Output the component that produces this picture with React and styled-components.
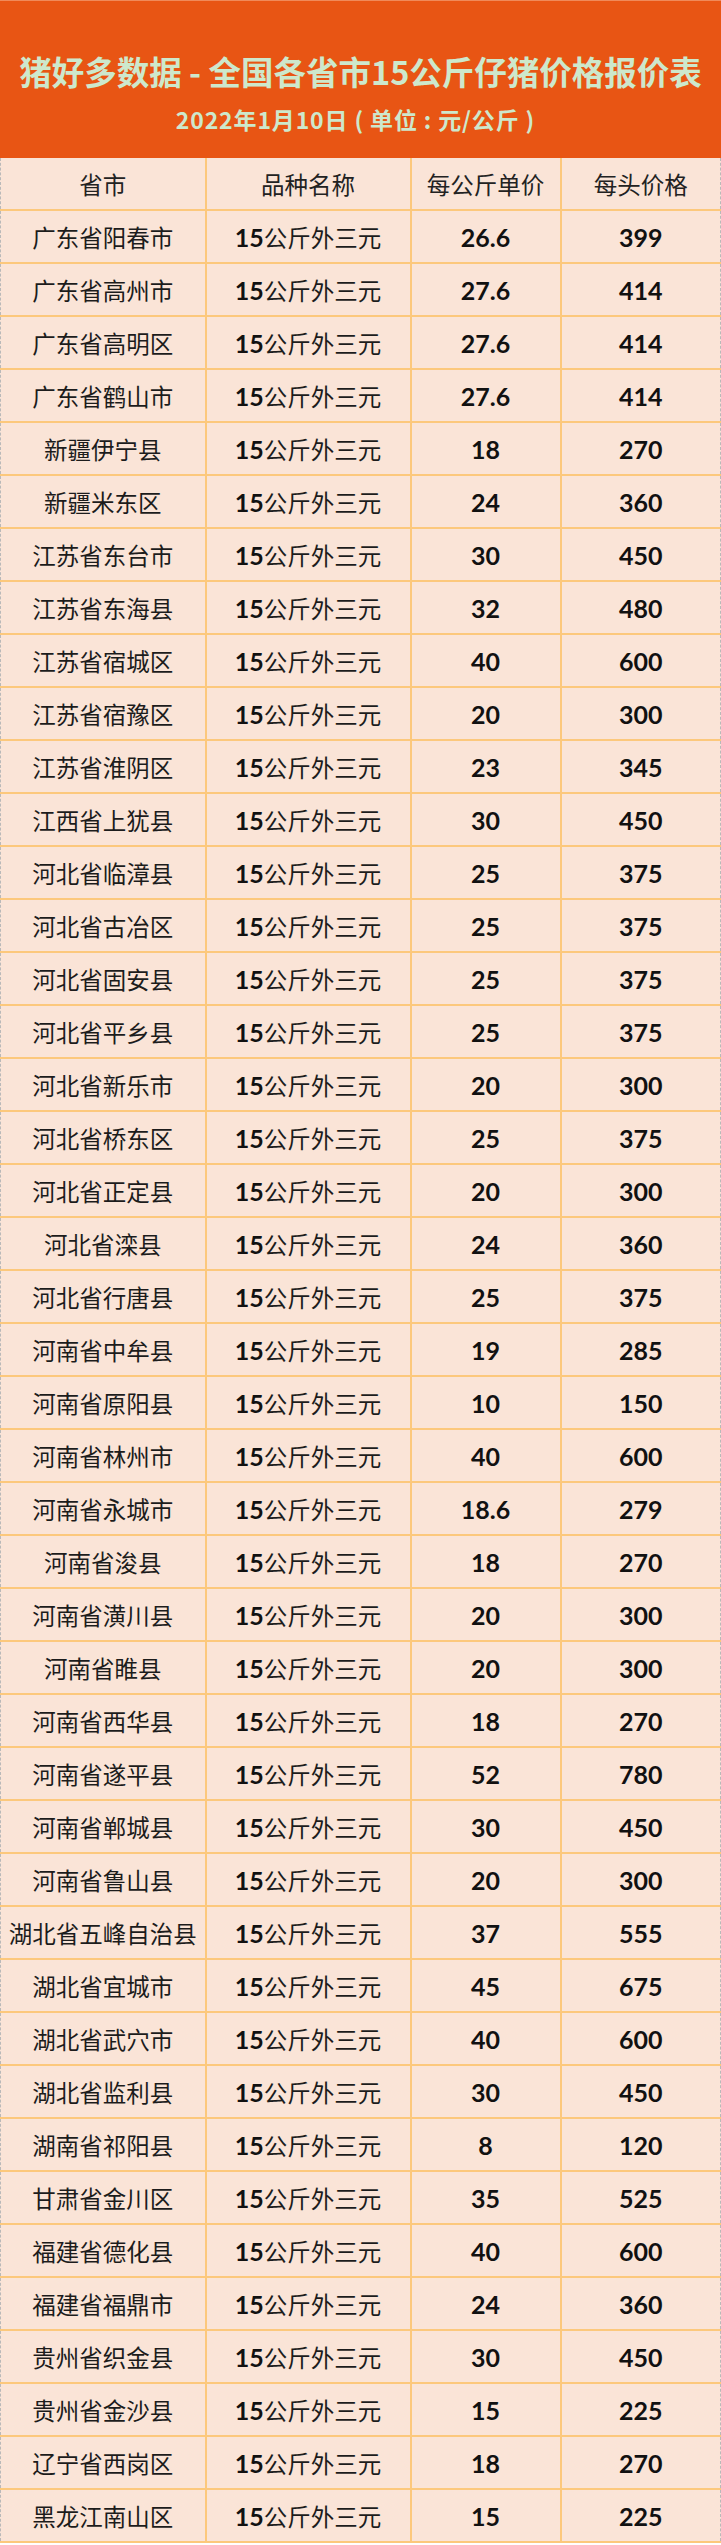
import React from 'react'
import styled, { createGlobalStyle } from 'styled-components'

const rows = [
  ['广东省阳春市', '26.6', '399'],
  ['广东省高州市', '27.6', '414'],
  ['广东省高明区', '27.6', '414'],
  ['广东省鹤山市', '27.6', '414'],
  ['新疆伊宁县', '18', '270'],
  ['新疆米东区', '24', '360'],
  ['江苏省东台市', '30', '450'],
  ['江苏省东海县', '32', '480'],
  ['江苏省宿城区', '40', '600'],
  ['江苏省宿豫区', '20', '300'],
  ['江苏省淮阴区', '23', '345'],
  ['江西省上犹县', '30', '450'],
  ['河北省临漳县', '25', '375'],
  ['河北省古冶区', '25', '375'],
  ['河北省固安县', '25', '375'],
  ['河北省平乡县', '25', '375'],
  ['河北省新乐市', '20', '300'],
  ['河北省桥东区', '25', '375'],
  ['河北省正定县', '20', '300'],
  ['河北省滦县', '24', '360'],
  ['河北省行唐县', '25', '375'],
  ['河南省中牟县', '19', '285'],
  ['河南省原阳县', '10', '150'],
  ['河南省林州市', '40', '600'],
  ['河南省永城市', '18.6', '279'],
  ['河南省浚县', '18', '270'],
  ['河南省潢川县', '20', '300'],
  ['河南省睢县', '20', '300'],
  ['河南省西华县', '18', '270'],
  ['河南省遂平县', '52', '780'],
  ['河南省郸城县', '30', '450'],
  ['河南省鲁山县', '20', '300'],
  ['湖北省五峰自治县', '37', '555'],
  ['湖北省宜城市', '45', '675'],
  ['湖北省武穴市', '40', '600'],
  ['湖北省监利县', '30', '450'],
  ['湖南省祁阳县', '8', '120'],
  ['甘肃省金川区', '35', '525'],
  ['福建省德化县', '40', '600'],
  ['福建省福鼎市', '24', '360'],
  ['贵州省织金县', '30', '450'],
  ['贵州省金沙县', '15', '225'],
  ['辽宁省西岗区', '18', '270'],
  ['黑龙江南山区', '15', '225'],
]

const GlobalStyle = createGlobalStyle`
  body {
    margin: 0;
    background: #ffffff;
    font-family: 'Noto Sans CJK SC', sans-serif;
  }
`

export default function App() {
  return (
    <>
      <GlobalStyle />
      <Page>
        <Banner>
          <Title>猪好多数据 - 全国各省市15公斤仔猪价格报价表</Title>
          <DateLine>2022年1月10日 ( 单位 : 元/公斤 )</DateLine>
        </Banner>
        <PriceTable>
          <colgroup>
            <col style={{ width: '205px' }} />
            <col style={{ width: '205px' }} />
            <col style={{ width: '150px' }} />
            <col />
          </colgroup>
          <thead>
            <tr>
              <HeadCell>省市</HeadCell>
              <HeadCell>品种名称</HeadCell>
              <HeadCell>每公斤单价</HeadCell>
              <HeadCell>每头价格</HeadCell>
            </tr>
          </thead>
          <tbody>
            {rows.map(([city, unit, total]) => (
              <tr key={city}>
                <Cell>{city}</Cell>
                <Cell>
                  <Num>15</Num>公斤外三元
                </Cell>
                <Cell>
                  <Num>{unit}</Num>
                </Cell>
                <Cell>
                  <Num>{total}</Num>
                </Cell>
              </tr>
            ))}
          </tbody>
        </PriceTable>
      </Page>
    </>
  )
}

const Page = styled.div`
  width: 721px;
  display: flex;
  flex-direction: column;
`

const Banner = styled.header`
  height: 158px;
  background: #e85514;
  display: flex;
  flex-direction: column;
  align-items: center;
  box-sizing: border-box;
  padding-top: 48px;
  border-top: 1px solid #f08a5a;
`

const Title = styled.h1`
  margin: 0;
  font-family: 'Noto Sans CJK SC', sans-serif;
  font-size: 32.5px;
  line-height: 44px;
  font-weight: 700;
  color: #cde8cc;
  white-space: nowrap;
`

const DateLine = styled.div`
  margin-top: 11px;
  margin-right: 10px;
  font-family: 'Noto Sans CJK SC', sans-serif;
  font-size: 23px;
  line-height: 30px;
  font-weight: 700;
  letter-spacing: 0.85px;
  color: #cde8cc;
  white-space: nowrap;
`

const PriceTable = styled.table`
  width: 721px;
  border-collapse: collapse;
  table-layout: fixed;
  background: #fae4d7;
  border-left: 1px dashed #b9b9b9;
  border-right: 1px dashed #b9b9b9;
`

const HeadCell = styled.th`
  height: 51px;
  padding: 0;
  border: 2px solid #fcc87c;
  border-top: none;
  font-family: 'Noto Sans CJK SC', sans-serif;
  font-size: 23.5px;
  font-weight: 400;
  color: #222222;
  text-align: center;
  vertical-align: middle;
  &:first-child {
    border-left: none;
  }
  &:last-child {
    border-right: none;
  }
`

const Cell = styled.td`
  height: 51px;
  padding: 0;
  border: 2px solid #fcc87c;
  font-family: 'Noto Sans CJK SC', sans-serif;
  font-size: 23.5px;
  font-weight: 400;
  color: #1c1c1c;
  text-align: center;
  vertical-align: middle;
  white-space: nowrap;
  &:first-child {
    border-left: none;
  }
  &:last-child {
    border-right: none;
  }
`

const Num = styled.span`
  font-family: 'Lato', 'Noto Sans CJK SC', sans-serif;
  font-size: 25px;
  font-weight: 700;
  color: #111111;
`
